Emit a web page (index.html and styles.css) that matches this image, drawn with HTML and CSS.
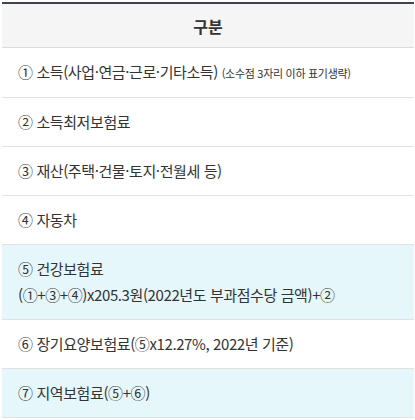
FILE: index.html
```html
<!DOCTYPE html>
<html lang="ko">
<head>
<meta charset="utf-8">
<link rel="stylesheet" href="styles.css">
</head>
<body>
<table class="tbl">
  <thead>
    <tr><th>구분</th></tr>
  </thead>
  <tbody>
    <tr><td>① 소득(사업·연금·근로·기타소득) <span class="small">(소수점 3자리 이하 표기생략)</span></td></tr>
    <tr><td>② 소득최저보험료</td></tr>
    <tr><td>③ 재산(주택·건물·토지·전월세 등)</td></tr>
    <tr><td>④ 자동차</td></tr>
    <tr class="hl"><td>⑤ 건강보험료<br>(①+③+④)x205.3원(2022년도 부과점수당 금액)+②</td></tr>
    <tr><td>⑥ 장기요양보험료(⑤x12.27%, 2022년 기준)</td></tr>
    <tr class="hl"><td>⑦ 지역보험료(⑤+⑥)</td></tr>
  </tbody>
</table>
</body>
</html>
```
FILE: styles.css
```css
html, body {
  margin: 0;
  padding: 0;
  background: #fff;
}
body {
  font-family: "Noto Sans CJK KR", "Noto Sans", sans-serif;
  color: #333;
}
.tbl {
  margin: 2px 0 0 2px;
  width: 412px;
  border-collapse: collapse;
  border-top: 2px solid #3f4159;
}
.tbl th {
  background: #f5f5f5;
  font-size: 16px;
  font-weight: 700;
  line-height: 24px;
  padding: 10px 16px 9px;
  border-bottom: 1px solid #dcdcdc;
  color: #333;
}
.tbl td {
  font-size: 15px;
  line-height: 26px;
  padding: 11px 16px;
  border-bottom: 1px solid #e2e2e2;
  letter-spacing: -0.4px;
  text-align: left;
}
.tbl tr.hl td {
  background: #e6f7fc;
}
.small {
  font-size: 11px;
  letter-spacing: -0.3px;
}
```
